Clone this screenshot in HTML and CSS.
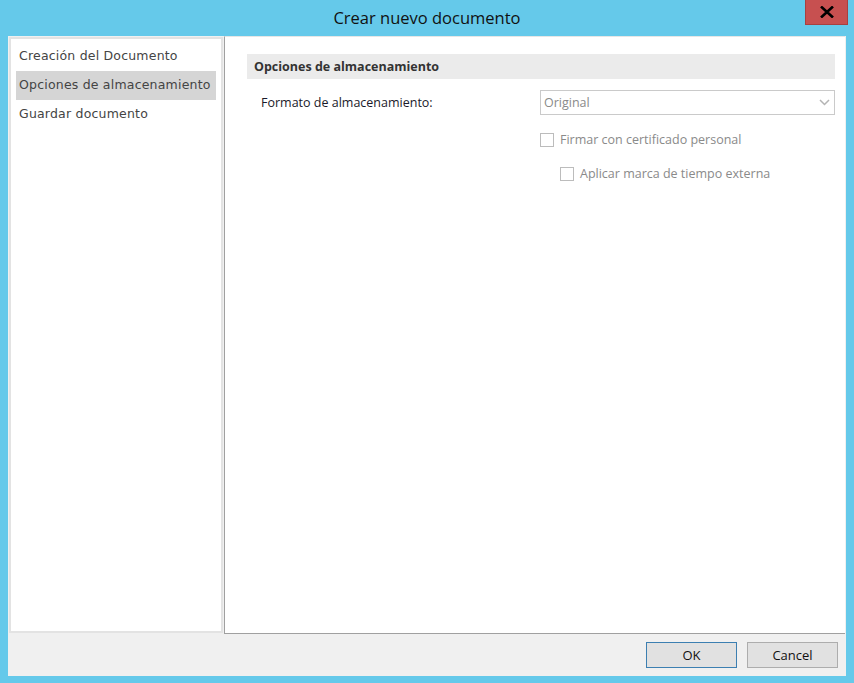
FILE: index.html
```html
<!DOCTYPE html>
<html lang="es">
<head>
    <meta charset="UTF-8">
    <meta name="viewport" content="width=device-width, initial-scale=1.0">
    <title>Crear nuevo documento</title>
    <link rel="stylesheet" href="styles.css">
</head>
<body>

<div class="window">
    <!-- Title bar -->
    <div class="title-bar">
        <span class="title">Crear nuevo documento</span>
        <button class="close-btn" aria-label="Cerrar">
            <svg width="14" height="12" viewBox="0 0 14 12">
                <path d="M1 0.5 L13 11.5 M13 0.5 L1 11.5" stroke="#000" stroke-width="2.6" fill="none"/>
            </svg>
        </button>
    </div>

    <div class="client">
        <div class="panes">
            <!-- Steps list -->
            <ul class="steps">
                <li class="step">Creación del Documento</li>
                <li class="step active">Opciones de almacenamiento</li>
                <li class="step">Guardar documento</li>
            </ul>

            <!-- Step content -->
            <div class="content">
                <div class="section-header">Opciones de almacenamiento</div>

                <div class="form-row">
                    <label class="form-label">Formato de almacenamiento:</label>
                    <div class="select disabled">
                        <span>Original</span>
                        <svg width="11" height="7" viewBox="0 0 11 7">
                            <path d="M1 1 L5.5 5.5 L10 1" stroke="#b4b4b4" stroke-width="1.5" fill="none"/>
                        </svg>
                    </div>
                </div>

                <div class="check-row">
                    <span class="checkbox"></span>
                    <span class="check-label">Firmar con certificado personal</span>
                </div>
                <div class="check-row nested">
                    <span class="checkbox"></span>
                    <span class="check-label">Aplicar marca de tiempo externa</span>
                </div>
            </div>
        </div>

        <!-- Buttons -->
        <div class="footer">
            <button class="btn default">OK</button>
            <button class="btn">Cancel</button>
        </div>
    </div>
</div>

</body>
</html>
```

FILE: styles.css
```css
body {
    margin: 0;
    padding: 0;
    background-color: #65c9ea;
    font-family: "Open Sans", "Noto Sans", sans-serif;
    color: #222;
}

.window {
    width: 854px;
    height: 683px;
    display: flex;
    flex-direction: column;
}

.title-bar {
    height: 36px;
    position: relative;
    display: flex;
    align-items: center;
    justify-content: center;
}

.title {
    font-size: 16.5px;
    color: #111;
    margin-top: -1px;
}

.close-btn {
    position: absolute;
    top: 0;
    right: 6px;
    width: 43px;
    height: 25px;
    padding: 0;
    border: 1px solid #a84040;
    border-top: none;
    background-color: #c75050;
    display: flex;
    align-items: center;
    justify-content: center;
}

.client {
    flex: 1;
    margin: 0 8px 7px 8px;
    background-color: #f0f0f0;
    display: flex;
    flex-direction: column;
}

.panes {
    height: 598px;
    display: flex;
}

.steps {
    list-style: none;
    margin: 1px 0 1px 1px;
    padding: 3px 5px;
    width: 200px;
    background: #fff;
    border: 2px solid #e3e3e3;
}

.step {
    height: 29px;
    line-height: 28px;
    padding-left: 3px;
    font-family: "DejaVu Sans", sans-serif;
    font-size: 12.5px;
    letter-spacing: 0.2px;
    color: #444;
}

.step.active {
    background-color: #d5d5d5;
}

.content {
    flex: 1;
    margin-left: 1px;
    margin-right: 1px;
    background: #fff;
    border-left: 1px solid #a0a0a0;
    border-bottom: 1px solid #a0a0a0;
    border-top: 1px solid #e6e6e6;
    padding: 17px 10px 0 22px;
}

.section-header {
    height: 25px;
    line-height: 25px;
    padding-left: 7px;
    background-color: #ebebeb;
    font-size: 12.5px;
    font-weight: bold;
    color: #333;
}

.form-row {
    display: flex;
    align-items: center;
    margin-top: 11px;
}

.form-label {
    width: 279px;
    padding-left: 14px;
    font-size: 12.5px;
    color: #1a1a2a;
}

.select {
    flex: 1;
    height: 23px;
    border: 1px solid #cacaca;
    display: flex;
    align-items: center;
    justify-content: space-between;
    padding: 0 4px 0 3px;
    font-size: 12.5px;
    color: #8a8a8a;
}

.check-row {
    display: flex;
    align-items: center;
    margin-top: 16px;
    margin-left: 293px;
}

.check-row.nested {
    margin-top: 17px;
    margin-left: 313px;
}

.checkbox {
    width: 12px;
    height: 12px;
    border: 1px solid #bcbcbc;
    background: #fff;
    margin-right: 6px;
}

.check-label {
    font-size: 12.5px;
    color: #8a8a8a;
}

.footer {
    flex: 1;
    display: flex;
    justify-content: flex-end;
    align-items: flex-start;
    gap: 10px;
    padding: 8px 8px 0 0;
}

.btn {
    width: 91px;
    height: 26px;
    border: 1px solid #adadad;
    background-color: #e1e1e1;
    font-family: "Open Sans", "Noto Sans", sans-serif;
    font-size: 13px;
    color: #111;
    padding: 0;
}

.btn.default {
    border-color: #3c7fb1;
}
```
